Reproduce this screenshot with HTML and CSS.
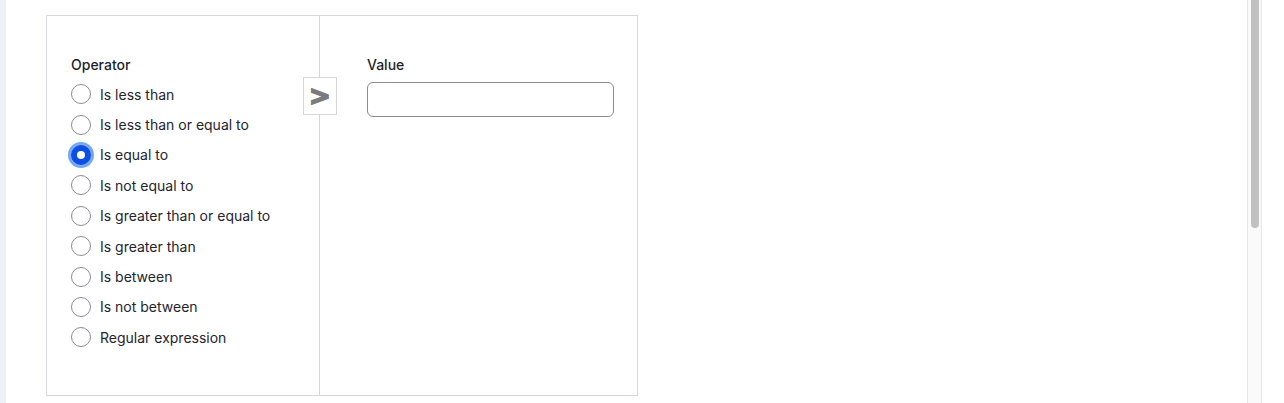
FILE: index.html
```html
<!DOCTYPE html>
<html>
<head>
<meta charset="utf-8">
<link rel="stylesheet" href="styles.css">
</head>
<body>
<div class="page">
  <div class="sidebar-edge"></div>
  <div class="main">
    <div class="panel">
      <div class="col col-operator">
        <div class="label">Operator</div>
        <div class="radios">
          <label class="radio-row"><span class="radio"></span><span>Is less than</span></label>
          <label class="radio-row"><span class="radio"></span><span>Is less than or equal to</span></label>
          <label class="radio-row"><span class="radio checked"></span><span>Is equal to</span></label>
          <label class="radio-row"><span class="radio"></span><span>Is not equal to</span></label>
          <label class="radio-row"><span class="radio"></span><span>Is greater than or equal to</span></label>
          <label class="radio-row"><span class="radio"></span><span>Is greater than</span></label>
          <label class="radio-row"><span class="radio"></span><span>Is between</span></label>
          <label class="radio-row"><span class="radio"></span><span>Is not between</span></label>
          <label class="radio-row"><span class="radio"></span><span>Regular expression</span></label>
        </div>
        <div class="op-badge">&gt;</div>
      </div>
      <div class="col col-value">
        <div class="label">Value</div>
        <div class="input"></div>
      </div>
    </div>
  </div>
  <div class="scrollbar"><div class="thumb"></div></div>
</div>
</body>
</html>
```
FILE: styles.css
```css
html, body {
  margin: 0;
  padding: 0;
  background: #ffffff;
}
body {
  font-family: Inter, "Noto Sans", sans-serif;
  color: #23232f;
  width: 1284px;
  height: 403px;
  overflow: hidden;
}
.page {
  position: relative;
  display: flex;
  height: 403px;
}
.sidebar-edge {
  width: 6px;
  background: #f0f1f7;
  flex: none;
}
.main {
  padding: 15px 0 0 40px;
}
.panel {
  display: flex;
  width: 590px;
  height: 379px;
  border: 1px solid #d6d6dc;
}
.col {
  position: relative;
}
.col-operator {
  width: 248px;
  padding: 41px 0 0 24px;
  border-right: 1px solid #d6d6dc;
}
.col-value {
  flex: 1;
  padding: 41px 0 0 47px;
}
.label {
  font-size: 14px;
  font-weight: 500;
  line-height: 16px;
  color: #1f1f2b;
}
.radios {
  display: flex;
  flex-direction: column;
  margin-top: 6px;
}
.radio-row {
  display: flex;
  align-items: center;
  height: 30.4px;
  font-size: 14px;
  color: #24242f;
}
.radio {
  width: 18px;
  height: 18px;
  border: 1px solid #8c8c96;
  border-radius: 50%;
  margin-right: 9px;
  box-sizing: content-box;
  flex: none;
  background: #fff;
}
.radio.checked {
  width: 8px;
  height: 8px;
  background: #ffffff;
  border: 6px solid #0b4fe6;
  box-shadow: 0 0 0 1px #8fa9e8, 0 0 0 3px #6ea9f7;
}
.op-badge {
  position: absolute;
  left: 256px;
  top: 61px;
  width: 32px;
  height: 36px;
  border: 1px solid #d6d6dc;
  background: #fff;
  display: flex;
  align-items: center;
  justify-content: center;
  font-family: "DejaVu Sans", sans-serif;
  font-weight: 700;
  font-size: 26px;
  color: #7b7b7f;
  -webkit-text-stroke: 1.6px #7b7b7f;
  line-height: 1;
}
.input {
  margin-top: 9px;
  width: 245px;
  height: 33px;
  border: 1px solid #8b8a96;
  border-radius: 6px;
  background: #fff;
}
.scrollbar {
  position: absolute;
  left: 1247px;
  top: 0;
  width: 13px;
  height: 403px;
  background: #fafafa;
  border-left: 1px solid #e6e6e6;
  border-right: 1px solid #e6e6e6;
}
.thumb {
  margin-left: 3px;
  width: 8px;
  height: 228px;
  background: #c1c1c1;
  border-radius: 0 0 4px 4px;
}
```
